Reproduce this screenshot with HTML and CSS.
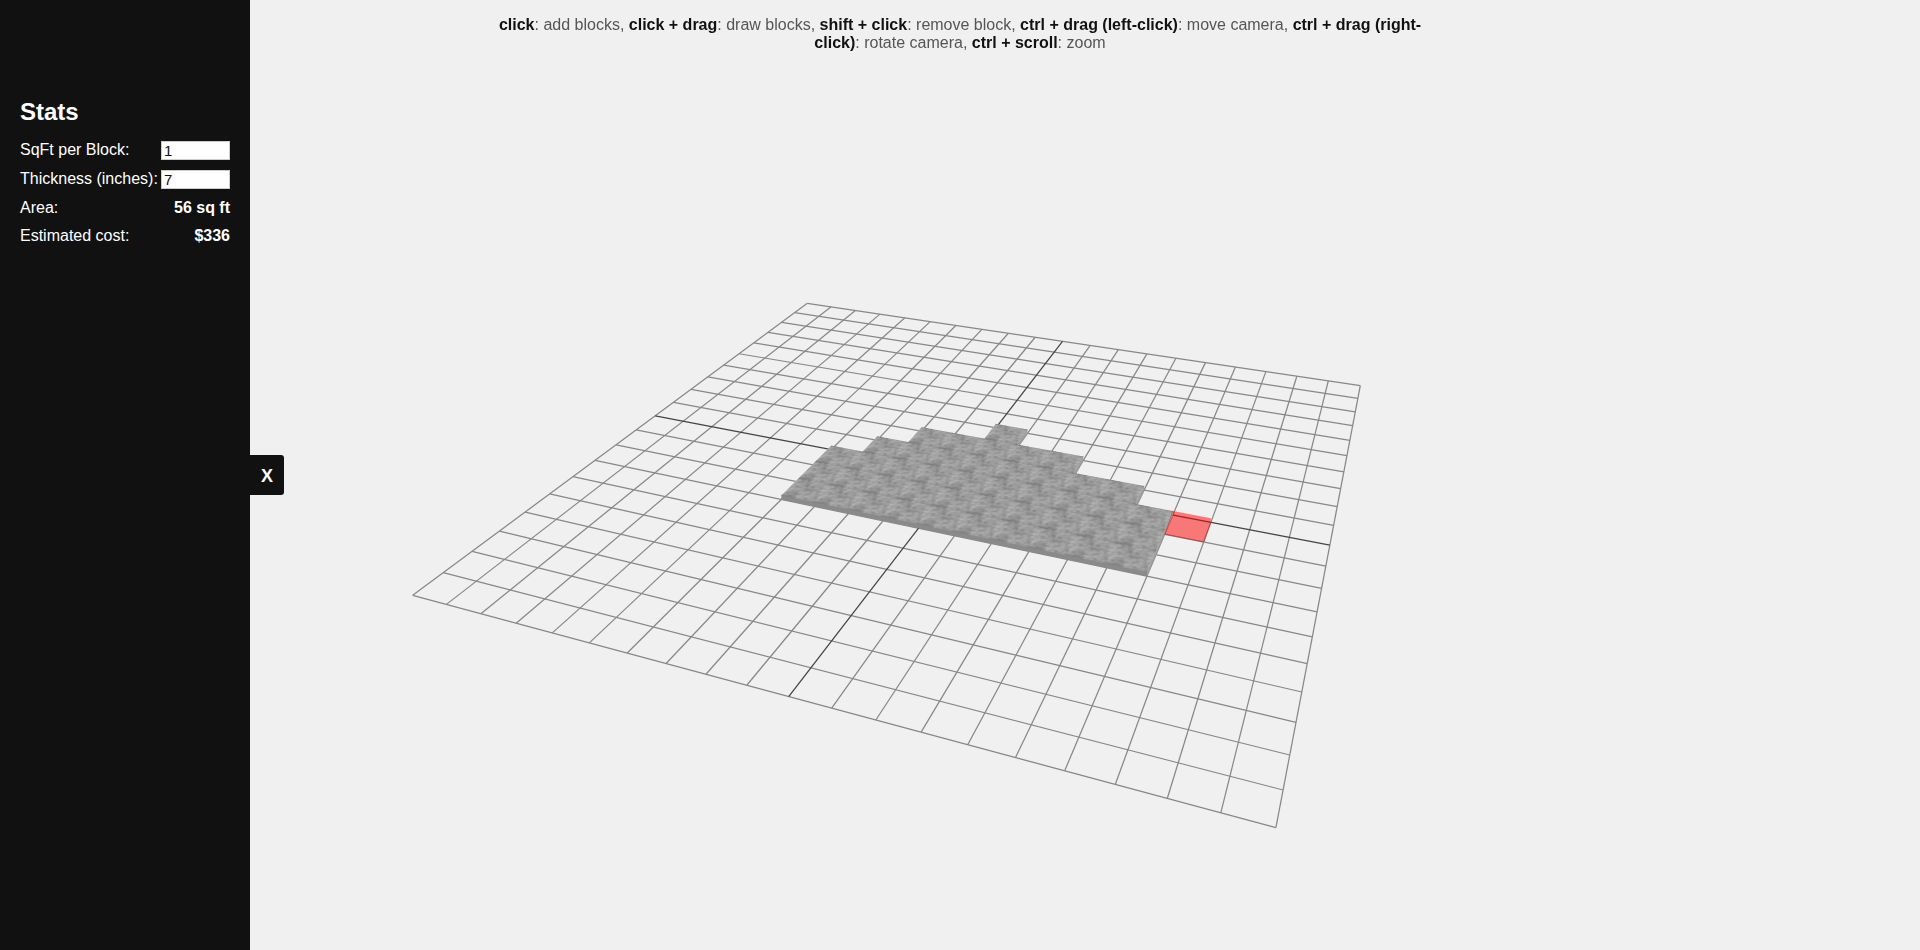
FILE: index.html
```html
<!DOCTYPE html>
<html lang="en">
<head>
<meta charset="utf-8">
<title>Concrete Estimator</title>
<link rel="stylesheet" href="styles.css">
</head>
<body>
<canvas id="scene" class="scene"></canvas>
<p class="help"><b>click</b>: add blocks, <b>click + drag</b>: draw blocks, <b>shift + click</b>: remove block, <b>ctrl + drag (left-click)</b>: move camera, <b>ctrl + drag (right-click)</b>: rotate camera, <b>ctrl + scroll</b>: zoom</p>
<aside class="sidebar">
  <h2 class="sidebar-title">Stats</h2>
  <div class="stat-row"><label for="sqft">SqFt per Block:</label><input id="sqft" class="stat-input" type="text" value="1"></div>
  <div class="stat-row"><label for="thick">Thickness (inches):</label><input id="thick" class="stat-input" type="text" value="7"></div>
  <div class="stat-row"><span>Area:</span><b>56 sq ft</b></div>
  <div class="stat-row"><span>Estimated cost:</span><b>$336</b></div>
  <button class="toggle" type="button">X</button>
</aside>
<script src="app.js"></script>
</body>
</html>
```
FILE: styles.css
```css
html, body {
  margin: 0;
  height: 100%;
  overflow: hidden;
  background: #f0f0f0;
  font-family: "Liberation Sans", Arial, sans-serif;
  font-size: 16px;
}

.scene {
  position: fixed;
  inset: 0;
  display: block;
}

.help {
  position: absolute;
  top: 16px;
  left: 50%;
  transform: translateX(-50%);
  width: 960px;
  margin: 0;
  line-height: 18px;
  text-align: center;
  color: #555;
}

.help b {
  color: #111;
}

.sidebar {
  position: fixed;
  top: 0;
  left: 0;
  bottom: 0;
  width: 250px;
  box-sizing: border-box;
  padding: 98px 20px 0;
  background: #111;
  color: #fff;
}

.sidebar-title {
  margin: 0 0 16px;
  font-size: 24px;
  font-weight: bold;
  line-height: 27px;
}

.stat-row {
  display: flex;
  justify-content: space-between;
  align-items: flex-start;
  margin-bottom: 10px;
  line-height: 18px;
}

.stat-input {
  width: 69px;
  height: 19px;
  box-sizing: border-box;
  margin: 0;
  padding: 1px 2px;
  border: 1px solid #ccc;
  border-radius: 0;
  background: #fff;
  color: #111;
  font-family: "Liberation Sans", Arial, sans-serif;
  font-size: 15px;
}

.toggle {
  position: absolute;
  top: 50%;
  left: 100%;
  width: 34px;
  height: 40px;
  transform: translateY(-50%);
  padding: 2px 0 0;
  border: 0;
  border-radius: 0 3px 3px 0;
  background: #111;
  color: #fff;
  font-family: "Liberation Sans", Arial, sans-serif;
  font-size: 18px;
  font-weight: bold;
}
```
FILE: app.js
```js
(function () {
  var canvas = document.getElementById('scene');
  var W = canvas.width = window.innerWidth;
  var H = canvas.height = window.innerHeight;
  var ctx = canvas.getContext('2d');
  var N = 20, LIFT = 4;

  // Ground plane projection, from the four corners of the grid on screen.
  var P = [[807.3, 303.3], [1360.3, 385.7], [1275.9, 827.7], [412.7, 595.3]];
  var dx1 = P[1][0] - P[2][0], dx2 = P[3][0] - P[2][0], sx = P[0][0] - P[1][0] + P[2][0] - P[3][0];
  var dy1 = P[1][1] - P[2][1], dy2 = P[3][1] - P[2][1], sy = P[0][1] - P[1][1] + P[2][1] - P[3][1];
  var det = dx1 * dy2 - dx2 * dy1;
  var g = (sx * dy2 - dx2 * sy) / det, h = (dx1 * sy - sx * dy1) / det;
  var a = P[1][0] - P[0][0] + g * P[1][0], b = P[3][0] - P[0][0] + h * P[3][0], c = P[0][0];
  var d = P[1][1] - P[0][1] + g * P[1][1], e = P[3][1] - P[0][1] + h * P[3][1], f = P[0][1];

  function project(i, j) {
    var u = i / N, v = j / N, w = g * u + h * v + 1;
    return [(a * u + b * v + c) / w, (d * u + e * v + f) / w];
  }

  // Inverse of the projection, in grid cell units.
  var A = e - f * h, B = c * h - b, C = b * f - c * e;
  var D = f * g - d, E = a - c * g, F = c * d - a * f;
  var G = d * h - e * g, I = b * g - a * h, J = a * e - b * d;
  function unproject(x, y) {
    var w = G * x + I * y + J;
    return [N * (A * x + B * y + C) / w, N * (D * x + E * y + F) / w];
  }

  // Background and grid
  ctx.fillStyle = '#f0f0f0';
  ctx.fillRect(0, 0, W, H);
  function gridLine(i0, j0, i1, j1, colour) {
    var p = project(i0, j0), q = project(i1, j1);
    ctx.strokeStyle = colour;
    ctx.lineWidth = 1.25;
    ctx.beginPath();
    ctx.moveTo(p[0], p[1]);
    ctx.lineTo(q[0], q[1]);
    ctx.stroke();
  }
  for (var n = 0; n <= N; n++) {
    if (n === N / 2) continue;
    gridLine(n, 0, n, N, '#888888');
    gridLine(0, n, N, n, '#888888');
  }
  gridLine(N / 2, 0, N / 2, N, '#444444');
  gridLine(0, N / 2, N, N / 2, '#444444');

  // Blocks: row index -> [first column, end column)
  var ROWS = { 7: [10, 11], 8: [8, 13], 9: [7, 15], 10: [6, 16], 11: [6, 16], 12: [6, 16] };
  function solid(i, j) {
    var r = ROWS[j];
    return !!r && i >= r[0] && i < r[1];
  }

  function quad(p, fill) {
    ctx.fillStyle = fill;
    ctx.beginPath();
    ctx.moveTo(p[0][0], p[0][1]);
    for (var k = 1; k < p.length; k++) ctx.lineTo(p[k][0], p[k][1]);
    ctx.closePath();
    ctx.fill();
  }
  function lifted(p, extra) { return [p[0], p[1] - LIFT - (extra || 0)]; }

  // Side faces; each is drawn one pixel into the top face so no seam shows,
  // and runs a little into the next face along.
  function sideFace(p, q, fill) {
    var end = [q[0] + (q[0] - p[0]) * 0.03, q[1] + (q[1] - p[1]) * 0.03];
    if (!fill) return;
    quad([p, end, lifted(end, 1), lifted(p, 1)], fill);
  }
  Object.keys(ROWS).forEach(function (key) {
    var j = +key, r = ROWS[j];
    for (var i = r[0]; i < r[1]; i++) {
      if (!solid(i + 1, j)) sideFace(project(i + 1, j), project(i + 1, j + 1), '#a0a0a0');
    }
  });
  Object.keys(ROWS).forEach(function (key) {
    var j = +key, r = ROWS[j];
    for (var i = r[0]; i < r[1]; i++) {
      if (!solid(i, j + 1)) {
        var p = project(i, j + 1), q = project(i + 1, j + 1);
        if (solid(i + 1, j + 1) || !solid(i + 1, j)) {
          quad([p, q, lifted(q, 1), lifted(p, 1)], '#8a8a8a');
        } else {
          sideFace(p, q, '#8a8a8a');
        }
      }
    }
  });

  // Periodic noise texture shared by every block
  var SIZE = 64, seed = 12345;
  function rnd() {
    seed = (seed * 1664525 + 1013904223) >>> 0;
    return seed / 4294967296;
  }
  function layer(cells) {
    var t = [], k;
    for (k = 0; k < cells * cells; k++) t.push(rnd());
    return function (x, y) {
      var fx = x * cells, fy = y * cells;
      var x0 = Math.floor(fx), y0 = Math.floor(fy);
      var tx = fx - x0, ty = fy - y0;
      tx = tx * tx * (3 - 2 * tx);
      ty = ty * ty * (3 - 2 * ty);
      function at(px, py) { return t[((py % cells + cells) % cells) * cells + ((px % cells + cells) % cells)]; }
      var top = at(x0, y0) * (1 - tx) + at(x0 + 1, y0) * tx;
      var low = at(x0, y0 + 1) * (1 - tx) + at(x0 + 1, y0 + 1) * tx;
      return top * (1 - ty) + low * ty;
    };
  }
  var n1 = layer(4), n2 = layer(7), n3 = layer(9);
  var tile = new Float32Array(SIZE * SIZE);
  for (var ty = 0; ty < SIZE; ty++) {
    for (var tx = 0; tx < SIZE; tx++) {
      var x = tx / SIZE, y = ty / SIZE;
      var skew = (x + y) % 1, anti = (x - y + 1) % 1;
      var val = 0.3 * n1(x, y) + 0.4 * n2(skew, anti) + 0.3 * n3(anti, skew);
      var edge = Math.min(y, 1 - y);
      tile[ty * SIZE + tx] = 153 + (val - 0.5) * 80 - (edge < 0.03 ? 10 : 0);
    }
  }

  // Top faces, sampled through the inverse projection with 3x3 antialiasing
  var X0 = 770, Y0 = 415, BW = 420, BH = 170;
  var img = ctx.getImageData(X0, Y0, BW, BH);
  var px = img.data;
  for (var py = 0; py < BH; py++) {
    for (var qx = 0; qx < BW; qx++) {
      var sum = 0, hits = 0;
      for (var s1 = 0; s1 < 3; s1++) {
        for (var s2 = 0; s2 < 3; s2++) {
          var uv = unproject(X0 + qx + (s1 + 0.5) / 3, Y0 + py + (s2 + 0.5) / 3 + LIFT);
          var ci = Math.floor(uv[0]), cj = Math.floor(uv[1]);
          if (solid(ci, cj)) {
            var fu = uv[0] - ci, fv = uv[1] - cj;
            sum += tile[Math.floor(fv * SIZE) * SIZE + Math.floor(fu * SIZE)];
            hits++;
          }
        }
      }
      if (hits) {
        var o = (py * BW + qx) * 4, cov = hits / 9, grey = sum / hits;
        px[o] = px[o] * (1 - cov) + grey * cov;
        px[o + 1] = px[o + 1] * (1 - cov) + grey * cov;
        px[o + 2] = px[o + 2] * (1 - cov) + grey * cov;
      }
    }
  }
  ctx.putImageData(img, X0, Y0);

  // Translucent red cursor box
  var r0 = project(16, 10), r1 = project(17, 10), r2 = project(17, 11), r3 = project(16, 11);
  var outline = [lifted(r0), lifted(r1), [r1[0], r1[1]], r2, r3, [r0[0], r0[1]]];
  quad(outline, 'rgba(255, 0, 0, 0.5)');
  ctx.strokeStyle = 'rgba(190, 40, 40, 0.45)';
  ctx.lineWidth = 1;
  ctx.beginPath();
  ctx.moveTo(outline[0][0], outline[0][1]);
  ctx.lineTo(r3[0], r3[1]);
  ctx.lineTo(r2[0], r2[1]);
  ctx.lineTo(r1[0], r1[1]);
  ctx.stroke();
})();
```
